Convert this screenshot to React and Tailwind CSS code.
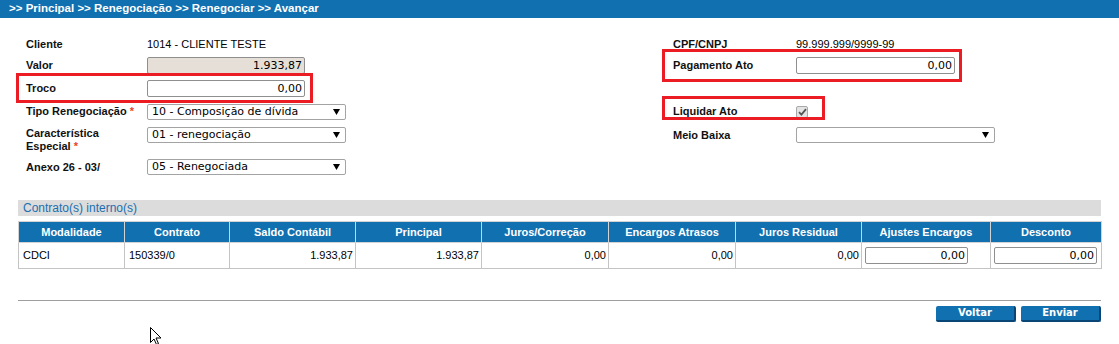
import React from "react";

function Tri() {
  return (
    <svg width="7" height="6" viewBox="0 0 7 6" className="shrink-0">
      <polygon points="0,0 7,0 3.5,6" fill="#000" />
    </svg>
  );
}

function Select({ text }) {
  return (
    <div className="flex items-center justify-between h-[16px] w-[199px] border border-[#a3a3a3] rounded-[2px] bg-white pl-[4px] pr-[5px] font-['DejaVu_Sans',sans-serif] text-[11px] leading-[14px] text-black">
      <span>{text}</span>
      <Tri />
    </div>
  );
}

function Field({ value, gray, w }) {
  return (
    <input
      readOnly
      value={value}
      className={
        (gray ? "bg-[#e6dfd7] " : "bg-white ") +
        (w === "r" ? "w-[159px] " : "w-[158px] ") +
        "h-[17px] border border-[#8f8f8f] rounded-[2px] text-right pr-[2px] font-['DejaVu_Sans',sans-serif] text-[11px] text-black outline-none"
      }
    />
  );
}

function Label({ children, w }) {
  return (
    <div className={(w === "r" ? "w-[123px] " : "w-[121px] ") + "shrink-0 font-bold text-[11px] text-[#111]"}>
      {children}
    </div>
  );
}

const Req = () => <span className="text-[#e8452c] ml-[3px]">*</span>;

const cols = [106, 105, 126, 126, 127, 127, 126, 129, 111];
const heads = [
  "Modalidade",
  "Contrato",
  "Saldo Contábil",
  "Principal",
  "Juros/Correção",
  "Encargos Atrasos",
  "Juros Residual",
  "Ajustes Encargos",
  "Desconto",
];

function TableInput() {
  return (
    <input
      readOnly
      value="0,00"
      className="block w-[103px] h-[17px] ml-[3px] border border-[#8f8f8f] rounded-[2px] bg-white text-right pr-[2px] font-['DejaVu_Sans',sans-serif] text-[11px] text-black outline-none"
    />
  );
}

export default function App() {
  return (
    <div className="relative w-[1119px] h-[344px] bg-white overflow-hidden font-['Liberation_Sans',Arial,sans-serif] text-[#111]">
      {/* breadcrumb bar */}
      <div className="h-[18px] bg-[#1170b0] pl-[9px] flex items-center text-white font-bold text-[11.5px] leading-none">
        &gt;&gt; Principal &gt;&gt; Renegociação &gt;&gt; Renegociar &gt;&gt; Avançar
      </div>

      {/* form */}
      <div className="flex pl-[26px]">
        <div className="w-[647px] flex flex-col">
          <div className="mt-[18px] h-[16px] flex items-center">
            <Label>Cliente</Label>
            <span className="text-[11px] text-black">1014 - CLIENTE TESTE</span>
          </div>
          <div className="mt-[5px] h-[17px] flex items-center">
            <Label>Valor</Label>
            <Field value="1.933,87" gray />
          </div>
          <div className="mt-[6px] h-[17px] flex items-center">
            <Label>Troco</Label>
            <Field value="0,00" />
          </div>
          <div className="mt-[6px] h-[17px] flex items-center">
            <Label>
              Tipo Renegociação<Req />
            </Label>
            <Select text="10 - Composição de dívida" />
          </div>
          <div className="mt-[7px] h-[26px] flex items-start">
            <Label>
              <div className="leading-[13px]">
                Característica
                <br />
                Especial<Req />
              </div>
            </Label>
            <Select text="01 - renegociação" />
          </div>
          <div className="mt-[6px] h-[16px] flex items-center">
            <Label>Anexo 26 - 03/</Label>
            <Select text="05 - Renegociada" />
          </div>
        </div>

        <div className="flex flex-col">
          <div className="mt-[18px] h-[16px] flex items-center">
            <Label w="r">CPF/CNPJ</Label>
            <span className="text-[11px] text-black">99.999.999/9999-99</span>
          </div>
          <div className="mt-[5px] h-[17px] flex items-center">
            <Label w="r">Pagamento Ato</Label>
            <Field value="0,00" w="r" />
          </div>
          <div className="mt-[6px] h-[17px]" />
          <div className="mt-[6px] h-[17px] flex items-center">
            <Label w="r">Liquidar Ato</Label>
            <div className="w-[12px] h-[12px] border border-[#a9a9a9] rounded-[2px] bg-[#e4e4e4] flex items-center justify-center">
              <svg width="9" height="8" viewBox="0 0 9 8">
                <path d="M1 4.2 L3.4 6.6 L8 1.2" fill="none" stroke="#555" strokeWidth="1.8" />
              </svg>
            </div>
          </div>
          <div className="mt-[7px] h-[16px] flex items-center">
            <Label w="r">Meio Baixa</Label>
            <Select text="" />
          </div>
        </div>
      </div>

      {/* contracts section */}
      <div className="mx-[18px] mt-[25px]">
        <div className="h-[16px] bg-[#dcdcdc] pl-[5px] flex items-center text-[12px] text-[#1b6fb0]">
          Contrato(s) interno(s)
        </div>
        <table className="mt-[5px] w-[1083px] table-fixed border-collapse border border-[#c4c4c4]">
          <colgroup>
            {cols.map((c, i) => (
              <col key={i} style={{ width: c }} />
            ))}
          </colgroup>
          <thead>
            <tr className="h-[21px] bg-[#1170b0]">
              {heads.map((h) => (
                <th
                  key={h}
                  className="border border-[#d3d3d3] text-white font-bold text-[11px] text-center p-0"
                >
                  {h}
                </th>
              ))}
            </tr>
          </thead>
          <tbody>
            <tr className="h-[26px] text-[11px] text-black">
              <td className="border border-[#c4c4c4] pl-[4px]">CDCI</td>
              <td className="border border-[#c4c4c4] pl-[4px]">150339/0</td>
              <td className="border border-[#c4c4c4] text-right pr-[2px]">1.933,87</td>
              <td className="border border-[#c4c4c4] text-right pr-[2px]">1.933,87</td>
              <td className="border border-[#c4c4c4] text-right pr-[2px]">0,00</td>
              <td className="border border-[#c4c4c4] text-right pr-[2px]">0,00</td>
              <td className="border border-[#c4c4c4] text-right pr-[2px]">0,00</td>
              <td className="border border-[#c4c4c4] p-0">
                <TableInput />
              </td>
              <td className="border border-[#c4c4c4] p-0">
                <TableInput />
              </td>
            </tr>
          </tbody>
        </table>

        <div className="mt-[31px] border-t border-[#9e9e9e]" />
        <div className="mt-[5px] flex justify-end gap-[5px]">
          {["Voltar", "Enviar"].map((b) => (
            <button
              key={b}
              className="w-[80px] h-[16px] bg-[#1170b0] border-r-[2px] border-b-[2px] border-[#0a4675] rounded-[2px] text-white font-bold text-[10px] leading-none font-['DejaVu_Sans',sans-serif]"
            >
              {b}
            </button>
          ))}
        </div>
      </div>

      {/* red annotation boxes */}
      <div className="absolute left-[16px] top-[73px] w-[297px] h-[30px] border-[3px] border-[#ec1c24]" />
      <div className="absolute left-[662px] top-[49px] w-[300px] h-[33px] border-[3px] border-[#ec1c24]" />
      <div className="absolute left-[662px] top-[96px] w-[163px] h-[24px] border-[3px] border-[#ec1c24]" />

      {/* mouse cursor */}
      <svg className="absolute left-[150px] top-[327px]" width="13" height="18" viewBox="0 0 13 18">
        <path
          d="M0.5 0.5 L0.5 15.5 L4 12 L6.5 17.5 L8.5 16.6 L6 11 L11 11 Z"
          fill="#fff"
          stroke="#000"
          strokeWidth="1"
        />
      </svg>
    </div>
  );
}
